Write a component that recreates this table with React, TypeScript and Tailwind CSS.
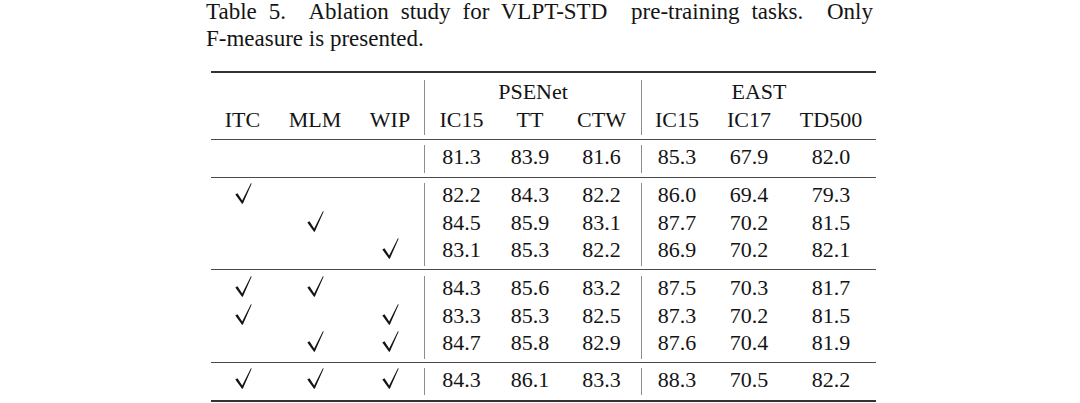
import React from "react";

type Row = { checks: [boolean, boolean, boolean]; vals: string[] };

const groups: Row[][] = [
  [{ checks: [false, false, false], vals: ["81.3", "83.9", "81.6", "85.3", "67.9", "82.0"] }],
  [
    { checks: [true, false, false], vals: ["82.2", "84.3", "82.2", "86.0", "69.4", "79.3"] },
    { checks: [false, true, false], vals: ["84.5", "85.9", "83.1", "87.7", "70.2", "81.5"] },
    { checks: [false, false, true], vals: ["83.1", "85.3", "82.2", "86.9", "70.2", "82.1"] },
  ],
  [
    { checks: [true, true, false], vals: ["84.3", "85.6", "83.2", "87.5", "70.3", "81.7"] },
    { checks: [true, false, true], vals: ["83.3", "85.3", "82.5", "87.3", "70.2", "81.5"] },
    { checks: [false, true, true], vals: ["84.7", "85.8", "82.9", "87.6", "70.4", "81.9"] },
  ],
  [{ checks: [true, true, true], vals: ["84.3", "86.1", "83.3", "88.3", "70.5", "82.2"] }],
];

// padding above / below the rows of each data group, to sit like the booktabs rules
const groupPad = ["pt-[5px] pb-[4.5px]", "pt-[5px] pb-[3px]", "pt-[6.5px] pb-[3px]", "pt-[5px] pb-[5px]"];

const cols = "grid grid-cols-[63px_82px_68px_74px_64px_79px_71px_74px_90px]";
const bar = "border-l border-[#8c8c8c]";

function Check() {
  return (
    <svg width="17" height="21" viewBox="0 0 17 21" className="ml-[1px] text-[#141414]">
      <polygon
        points="0.3,11.4 2.5,10.3 7.2,17.4 15.9,0.2 16.7,0.6 7.8,20.8 7.0,20.8"
        fill="currentColor"
      />
    </svg>
  );
}

function DataRow({ row }: { row: Row }) {
  return (
    <div className={`${cols} h-[27.5px] leading-[23px]`}>
      {row.checks.map((c, i) => (
        <div key={i} className="flex items-start justify-center">
          {c && <Check />}
        </div>
      ))}
      {row.vals.map((v, i) => (
        <div key={i} className={`text-center ${i === 0 || i === 3 ? bar : ""}`}>
          {v}
        </div>
      ))}
    </div>
  );
}

export default function App() {
  return (
    <div className="h-[403px] overflow-hidden bg-white font-['Liberation_Serif',serif] text-[22px] text-[#141414]">
      <div className="mx-auto w-[670px]">
        <div className="ml-[1px] w-[667px] text-[23px]">
          <p className="text-justify leading-[24px] [text-align-last:justify]">
            Table 5.&nbsp; Ablation study for VLPT-STD&nbsp; pre-training tasks.&nbsp; Only
          </p>
          <p className="leading-[29px]">F-measure is presented.</p>
        </div>

        <div className="ml-[6px] mt-[18px] w-[665px] border-t-2 border-b-2 border-[#333]">
          {/* header */}
          <div className="pt-[7px] pb-[4px]">
            <div className={`${cols} h-[27.5px] leading-[23px]`}>
              <div className="col-span-3" />
              <div className={`col-span-3 text-center ${bar}`}>PSENet</div>
              <div className={`col-span-3 text-center ${bar}`}>EAST</div>
            </div>
            <div className={`${cols} h-[27.5px] leading-[23px]`}>
              <div className="text-center">ITC</div>
              <div className="text-center">MLM</div>
              <div className="text-center">WIP</div>
              <div className={`text-center ${bar}`}>IC15</div>
              <div className="text-center">TT</div>
              <div className="text-center">CTW</div>
              <div className={`text-center ${bar}`}>IC15</div>
              <div className="text-center">IC17</div>
              <div className="text-center">TD500</div>
            </div>
          </div>

          {groups.map((g, gi) => (
            <div key={gi} className={`border-t border-[#4a4a4a] ${groupPad[gi]}`}>
              {g.map((row, ri) => (
                <DataRow key={ri} row={row} />
              ))}
            </div>
          ))}
        </div>
      </div>
    </div>
  );
}
